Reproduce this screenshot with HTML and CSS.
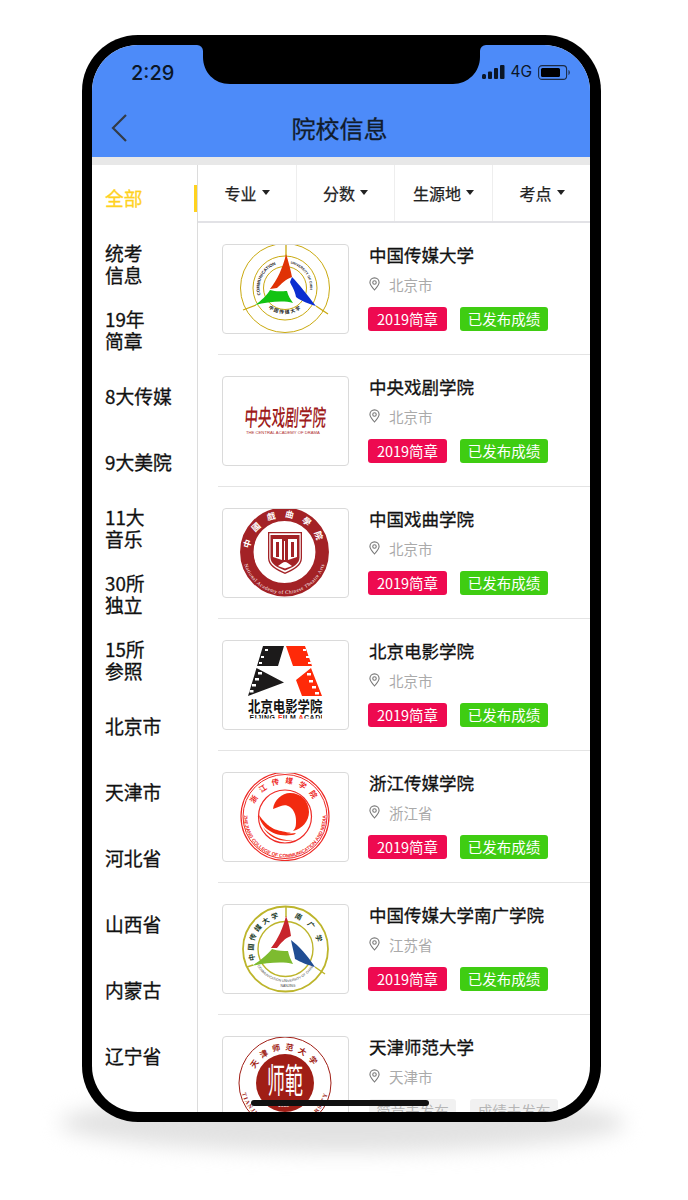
FILE: index.html
```html
<!DOCTYPE html>
<html lang="zh">
<head>
<meta charset="utf-8">
<title>院校信息</title>
<link rel="stylesheet" href="styles.css">
</head>
<body>
<div class="stage">
  <div class="shadow"></div>
  <div class="phone">
    <div class="screen">
      <header class="top">
        <div class="status">
          <span class="time">2:29</span>
          <div class="sys">
            <svg class="signal" width="23" height="14" viewBox="0 0 23 14"><rect x="0" y="9" width="4" height="5" rx="1.5"/><rect x="6" y="6.5" width="4" height="7.5" rx="1"/><rect x="12" y="3" width="4" height="11" rx="1"/><rect x="18" y="0" width="4.5" height="14" rx="1"/></svg>
            <span class="net">4G</span>
            <svg class="batt" width="32" height="15" viewBox="0 0 32 15"><rect x="0.6" y="0.6" width="28" height="13.8" rx="3.5" fill="none" stroke="#1b2a44" stroke-width="1.1"/><rect x="3" y="3" width="19" height="9" rx="1.5" fill="#000"/><path d="M30.5 5v5c.8-.3 1.3-1.3 1.3-2.5S31.300 5.300 30.500 5z" fill="#1b2a44"/></svg>
          </div>
        </div>
        <div class="nav">
          <svg class="back" width="18" height="30" viewBox="0 0 18 30"><path d="M16 2 3 15l13 13" fill="none" stroke="#333b47" stroke-width="2.200"/></svg>
          <h1 class="title">院校信息</h1>
        </div>
      </header>
      <div class="band"></div>
      <div class="body">
        <aside class="side">
          <div class="cat on">全部</div>
          <div class="cat">统考<br>信息</div>
          <div class="cat">19年<br>简章</div>
          <div class="cat">8大传媒</div>
          <div class="cat">9大美院</div>
          <div class="cat">11大<br>音乐</div>
          <div class="cat">30所<br>独立</div>
          <div class="cat">15所<br>参照</div>
          <div class="cat">北京市</div>
          <div class="cat">天津市</div>
          <div class="cat">河北省</div>
          <div class="cat">山西省</div>
          <div class="cat">内蒙古</div>
          <div class="cat">辽宁省</div>
        </aside>
        <main class="main">
          <div class="filters">
            <div class="filter">专业</div>
            <div class="filter">分数</div>
            <div class="filter">生源地</div>
            <div class="filter">考点</div>
          </div>

          <article class="row">
            <div class="logo">
              <svg viewBox="0 0 127 90" width="127" height="90">
                <defs>
                  <path id="a1" d="M38.500 51A25 25 0 0 1 58 19.500"/>
                  <path id="a2" d="M68.500 19.500A25 25 0 0 1 88 46"/>
                  <path id="a3" d="M40 57A27 27 0 0 0 86 57"/>
                </defs>
                <g fill="none" stroke="#c9a90f" stroke-width="1">
                  <circle cx="63" cy="44" r="44.500"/>
                  <circle cx="63" cy="44" r="32"/>
                  <circle cx="63" cy="44" r="21.500"/>
                  <path d="M64 1v11M21 66l13-5M94 62l12 8" stroke-width="1.300"/>
                </g>
                <path d="M64 10c3 9 5 18 6 23-6 2-11 7-15 11l-7 1c7-9 13-21 16-35z" fill="#e03205"/>
                <path d="M70 33c7 7 15 18 24 29-7-2-15-5-20-9-1-7-5-12-6-15z" fill="#0b2ed0"/>
                <path d="M33 61c6-4 12-10 15-15 6 2 13 1 17 1 1 5 4 9 6 12-10-3-25-1-38 2z" fill="#12c312"/>
                <text class="t-gold"><textPath href="#a1">COMMUNICATION</textPath></text>
                <text class="t-gold-s"><textPath href="#a2">UNIVERSITY OF CHINA</textPath></text>
                <text class="t-seal"><textPath href="#a3" startOffset="50%">中国传媒大学</textPath></text>
              </svg>
            </div>
            <div class="info">
              <div class="name">中国传媒大学</div>
              <div class="loc"><svg class="pin" width="11" height="14" viewBox="0 0 12 15"><path d="M6 14C3 10.500 1 8.300 1 5.800a5 5 0 0 1 10 0C11 8.300 9 10.500 6 14z" fill="none" stroke="#777" stroke-width="1.200"/><circle cx="6" cy="5.800" r="1.900" fill="none" stroke="#777" stroke-width="1.200"/></svg><span>北京市</span></div>
              <div class="tags"><span class="tag red">2019简章</span><span class="tag green">已发布成绩</span></div>
            </div>
          </article>

          <article class="row">
            <div class="logo">
              <svg viewBox="0 0 127 90" width="127" height="90">
                <text class="t-drama" transform="translate(22 50) scale(1 1.700) skewX(-6)">中央戏剧学院</text>
                <text class="t-drama-en" x="24" y="57.500">THE CENTRAL ACADEMY OF DRAMA</text>
              </svg>
            </div>
            <div class="info">
              <div class="name">中央戏剧学院</div>
              <div class="loc"><svg class="pin" width="11" height="14" viewBox="0 0 12 15"><path d="M6 14C3 10.500 1 8.300 1 5.800a5 5 0 0 1 10 0C11 8.300 9 10.500 6 14z" fill="none" stroke="#777" stroke-width="1.200"/><circle cx="6" cy="5.800" r="1.900" fill="none" stroke="#777" stroke-width="1.200"/></svg><span>北京市</span></div>
              <div class="tags"><span class="tag red">2019简章</span><span class="tag green">已发布成绩</span></div>
            </div>
          </article>

          <article class="row">
            <div class="logo">
              <svg viewBox="0 0 127 90" width="127" height="90">
                <defs>
                  <path id="b1" d="M28 44A34.500 34.500 0 0 1 97 44"/>
                  <path id="b2" d="M20.500 44A42 42 0 0 0 104.500 44"/>
                </defs>
                <circle cx="62.500" cy="44" r="37.700" fill="none" stroke="#a32226" stroke-width="13.500"/>
                <text class="t-ring-cn"><textPath href="#b1" startOffset="50%">中國戲曲學院</textPath></text>
                <text class="t-ring-en"><textPath href="#b2" startOffset="50%">National Academy of Chinese Theatre Arts</textPath></text>
                <path d="M46 24h34v26c0 8-8 12-17 16-9-4-17-8-17-16z" fill="#a32226"/>
                <path d="M47.300 25.300h31.400v24.500c0 7-7 11-15.700 14.700-8.700-3.700-15.700-7.700-15.700-14.700z" fill="#fff"/>
                <path d="M48.500 27h29v22.500c0 6-6.500 10-14.500 13-8-3-14.500-7-14.500-13z" fill="#a32226"/>
                <path d="M51 31h9v21l-9-3zM66 31h9v18l-9 3z" fill="#fff"/>
                <path d="M54 34h3v15h-3zM69 34h3v15h-3z" fill="#a32226"/>
                <path d="M62.500 33v19" stroke="#fff" stroke-width="1"/>
                <path d="M56 58c3-2 5-4 7-4s4 2 7 4l-7 2.500z" fill="#fff"/>
              </svg>
            </div>
            <div class="info">
              <div class="name">中国戏曲学院</div>
              <div class="loc"><svg class="pin" width="11" height="14" viewBox="0 0 12 15"><path d="M6 14C3 10.500 1 8.300 1 5.800a5 5 0 0 1 10 0C11 8.300 9 10.500 6 14z" fill="none" stroke="#777" stroke-width="1.200"/><circle cx="6" cy="5.800" r="1.900" fill="none" stroke="#777" stroke-width="1.200"/></svg><span>北京市</span></div>
              <div class="tags"><span class="tag red">2019简章</span><span class="tag green">已发布成绩</span></div>
            </div>
          </article>

          <article class="row">
            <div class="logo">
              <svg viewBox="0 0 127 90" width="127" height="90">
                <path d="M41 6h21l-6 20H35zM34.500 28 62 42.500 26 56z" fill="#1c1a1a"/>
                <path d="M64 6h19l7 20H71zM89 28l11 28H80l-6-16z" fill="#ff2a08"/>
                <path d="M43 9h3v2h-3zM39 16h3v2h-3zM37 22h3v2h-3zM36 32h4v2.500h-4zM33 38h4v2.500h-4zM30 44h4v2.500h-4zM27.500 50h4v2.500h-4zM81 9h3v2h-3zM84 16h3v2h-3zM86 22h3v2h-3zM85 33h4v2.500h-4zM87 40h4v2.500h-4zM90 46h4v2.500h-4zM93 52h4v2.500h-4z" fill="#fff"/>
                <text class="t-film" transform="translate(26 72) scale(1 1.150)">北京电影学院</text>
                <text class="t-film-en" x="22" y="80">BEIJING <tspan class="t-red">F</tspan>ILM <tspan class="t-red">A</tspan>CADEMY</text>
                <rect x="2" y="78.500" width="123" height="8" fill="#fff"/>
                <rect x="2" y="73.300" width="25" height="6" fill="#fff"/>
                <rect x="100" y="73.300" width="25" height="6" fill="#fff"/>
              </svg>
            </div>
            <div class="info">
              <div class="name">北京电影学院</div>
              <div class="loc"><svg class="pin" width="11" height="14" viewBox="0 0 12 15"><path d="M6 14C3 10.500 1 8.300 1 5.800a5 5 0 0 1 10 0C11 8.300 9 10.500 6 14z" fill="none" stroke="#777" stroke-width="1.200"/><circle cx="6" cy="5.800" r="1.900" fill="none" stroke="#777" stroke-width="1.200"/></svg><span>北京市</span></div>
              <div class="tags"><span class="tag red">2019简章</span><span class="tag green">已发布成绩</span></div>
            </div>
          </article>

          <article class="row">
            <div class="logo">
              <svg viewBox="0 0 127 90" width="127" height="90">
                <defs>
                  <path id="c1" d="M30 44.500A33 33 0 0 1 96 44.500"/>
                  <path id="c2" d="M22.500 38A41 41 0 1 0 103.500 38"/>
                </defs>
                <circle cx="63" cy="44.500" r="44" fill="none" stroke="#ee2a26" stroke-width="1.200"/>
                <circle cx="63" cy="44.500" r="42" fill="none" stroke="#ee2a26" stroke-width="1"/>
                <circle cx="63" cy="44.500" r="26.500" fill="none" stroke="#ee2a26" stroke-width="1.200"/>
                <text class="t-z-cn"><textPath href="#c1" startOffset="50%">浙江传媒学院</textPath></text>
                <text class="t-z-en"><textPath href="#c2" startOffset="50%">ZHEJIANG COLLEGE OF COMMUNICATION AND MEDIA</textPath></text>
                <path d="M51 37C52 28 60 21 68 21c11 0 19 8 19 19 0 9-7 17-16 19 3-3 3-6 3-10 0-6-2-11-6-14-3-2-6-2-9-1-3 1-5 2-8 3z" fill="#f22a10"/>
                <path d="M37 43c1 11 14 23 33 20 2 0 3-1 4-2-13 2-28-4-37-18zM41 55c7 9 19 14 30 13-11 3-24-2-30-13zM44 51c6 8 14 10 25 10-3-1-20-2-25-10z" fill="#f22a10"/>
              </svg>
            </div>
            <div class="info">
              <div class="name">浙江传媒学院</div>
              <div class="loc"><svg class="pin" width="11" height="14" viewBox="0 0 12 15"><path d="M6 14C3 10.500 1 8.300 1 5.800a5 5 0 0 1 10 0C11 8.300 9 10.500 6 14z" fill="none" stroke="#777" stroke-width="1.200"/><circle cx="6" cy="5.800" r="1.900" fill="none" stroke="#777" stroke-width="1.200"/></svg><span>浙江省</span></div>
              <div class="tags"><span class="tag red">2019简章</span><span class="tag green">已发布成绩</span></div>
            </div>
          </article>

          <article class="row">
            <div class="logo">
              <svg viewBox="0 0 127 90" width="127" height="90">
                <defs>
                  <path id="d1" d="M33.400 56A32 32 0 0 1 58 13.500"/>
                  <path id="d2" d="M72 14A32 32 0 0 1 95 52"/>
                  <path id="d3" d="M35.200 62A33 33 0 0 0 91.800 62"/>
                </defs>
                <g fill="none" stroke="#bdb52c">
                  <circle cx="63.500" cy="45" r="42.500" stroke-width="1.800"/>
                  <circle cx="63.500" cy="45" r="27.500" stroke-width="1.400"/>
                  <path d="M64 3v10M25 63l6-2M93 63l10 7" stroke-width="1.500"/>
                </g>
                <path d="M64 12c3 7 4 14 5 20-6 2-10 7-14 12l-6 0c7-9 12-20 15-32z" fill="#c8252c"/>
                <path d="M69 36c8 6 16 15 24 27-7-2-15-5-20-8-1-7-3-13-4-19z" fill="#204d94"/>
                <path d="M29 62c8-4 16-11 21-17 6 2 12 2 16 2 1 5 3 9 5 13-11-3-28-1-42 2z" fill="#7dbb2f"/>
                <text class="t-olive-cn"><textPath href="#d1">中国传媒大学</textPath></text>
                <text class="t-olive-cn2"><textPath href="#d2">南广学院</textPath></text>
                <text class="t-olive-en"><textPath href="#d3" startOffset="50%">COMMUNICATION UNIVERSITY OF CHINA</textPath></text>
                <text class="t-olive-en" x="66" y="83">NANJING</text>
              </svg>
            </div>
            <div class="info">
              <div class="name">中国传媒大学南广学院</div>
              <div class="loc"><svg class="pin" width="11" height="14" viewBox="0 0 12 15"><path d="M6 14C3 10.500 1 8.300 1 5.800a5 5 0 0 1 10 0C11 8.300 9 10.500 6 14z" fill="none" stroke="#777" stroke-width="1.200"/><circle cx="6" cy="5.800" r="1.900" fill="none" stroke="#777" stroke-width="1.200"/></svg><span>江苏省</span></div>
              <div class="tags"><span class="tag red">2019简章</span><span class="tag green">已发布成绩</span></div>
            </div>
          </article>

          <article class="row">
            <div class="logo">
              <svg viewBox="0 0 127 90" width="127" height="90">
                <defs>
                  <path id="e1" d="M30 47A33 33 0 0 1 96 47"/>
                  <path id="e2" d="M19 47A44 44 0 0 0 107 47"/>
                </defs>
                <circle cx="63" cy="47" r="46" fill="none" stroke="#a01e16" stroke-width="1"/>
                <circle cx="63" cy="47" r="29" fill="#a01e16"/>
                <text class="t-seal-big" transform="translate(45 57) scale(1 1.900)">师範</text>
                <text class="t-seal-ring"><textPath href="#e1" startOffset="50%">天津师范大学</textPath></text>
                <text class="t-seal-en"><textPath href="#e2" startOffset="50%">TIANJIN NORMAL UNIVERSITY</textPath></text>
                <text class="t-seal-yr" x="56" y="71">1958</text>
              </svg>
            </div>
            <div class="info">
              <div class="name">天津师范大学</div>
              <div class="loc"><svg class="pin" width="11" height="14" viewBox="0 0 12 15"><path d="M6 14C3 10.500 1 8.300 1 5.800a5 5 0 0 1 10 0C11 8.300 9 10.500 6 14z" fill="none" stroke="#777" stroke-width="1.200"/><circle cx="6" cy="5.800" r="1.900" fill="none" stroke="#777" stroke-width="1.200"/></svg><span>天津市</span></div>
              <div class="tags"><span class="tag off">简章未发布</span><span class="tag off">成绩未发布</span></div>
            </div>
          </article>
        </main>
      </div>
      <div class="home"></div>
    </div>
    <svg class="notch" width="290" height="40" viewBox="0 0 290 40"><path d="M0 0h290a6 6 0 0 0-6 6v6c0 15-12 27-27 27H34C18 39 7 27 7 12V6a6 6 0 0 0-6-6z" fill="#000"/></svg>
  </div>
</div>
</body>
</html>
```
FILE: styles.css
```css
* { box-sizing: border-box; }
html, body { margin: 0; padding: 0; background: #fff; }
body { font-family: "Noto Sans CJK SC", "Noto Sans", sans-serif; color: #111; }

.stage { position: relative; width: 688px; height: 1200px; padding: 35px 0 0 82px; overflow: hidden; }
.shadow {
  position: absolute; left: 60px; top: 1094px; width: 565px; height: 58px;
  border-radius: 50%; background: #e2e2e2; filter: blur(10px);
}
.phone {
  position: relative; width: 519px; height: 1087px;
  background: #000; border-radius: 56px; padding: 10px 11px 10px 10px;
}
.screen {
  position: relative; width: 498px; height: 1067px; background: #fff;
  border-radius: 46px; overflow: hidden; display: flex; flex-direction: column;
}
.notch { position: absolute; left: 114px; top: 10px; }

.top { background: #4d8bf9; height: 112px; flex: none; }
.status { display: flex; justify-content: space-between; align-items: center; height: 52px; padding: 2px 20px 0 39px; }
.time { font: 500 20px/26px Inter, sans-serif; color: #0b1626; margin-top: 2px; }
.sys { display: flex; align-items: center; gap: 5px; }
.signal { fill: #0b1626; }
.net { font: 400 15.500px/16px Inter, sans-serif; color: #0b1626; }
.batt { margin-left: 1px; }
.nav { position: relative; display: flex; align-items: center; justify-content: center; height: 50px; padding: 12px 3px 0 0; }
.back { position: absolute; left: 18px; top: 16px; }
.title { margin: 0; font-size: 24px; line-height: 32px; font-weight: 400; color: #111c2c; -webkit-text-stroke: .3px #111c2c; }
.band { height: 8px; background: #e8e8e8; flex: none; }

.body { display: flex; flex: 1; min-height: 0; }
.side { width: 106px; flex: none; border-right: 1.500px solid #dcdcdc; }
.cat {
  position: relative; height: 66px; padding-left: 13px; display: flex; align-items: center;
  font-size: 18.800px; line-height: 22px; color: #111; -webkit-text-stroke: .3px #111;
}
.cat.on { color: #ffd21f; -webkit-text-stroke: .3px #ffd21f; }
.cat.on::after {
  content: ""; position: absolute; right: 0; top: 20px; width: 3px; height: 27px; background: #ffd21f;
}

.main { flex: 1; min-width: 0; }
.filters { display: flex; height: 58px; border-bottom: 2px solid #e2e2e6; }
.filter {
  flex: 0 0 98px; display: flex; align-items: center; justify-content: center; gap: 5px;
  font-size: 16px; color: #222; -webkit-text-stroke: .25px #222; border-right: 1.500px solid #eee;
}
.filter:first-child { flex-basis: 99px; }
.filter:last-child { border-right: 0; }
.filter::after {
  content: ""; border-left: 4.500px solid transparent; border-right: 4.500px solid transparent;
  border-top: 5px solid #222; margin-top: -1px;
}

.row { display: flex; height: 132px; margin-left: 20px; padding: 21px 0 0 4px; border-bottom: 1.500px solid #e4e4e4; }
.logo {
  width: 127px; height: 90px; flex: none; background: #fff; border: 1.500px solid #dadada; border-radius: 4px;
  overflow: hidden; display: flex; align-items: center; justify-content: center;
}
.logo svg { display: block; flex: none; }
.info { margin-left: 20px; display: flex; flex-direction: column; }
.name { font-size: 17.500px; line-height: 22px; color: #111; -webkit-text-stroke: .3px #111; }
.loc { display: flex; align-items: center; gap: 9px; margin-top: 7px; height: 22px; font-size: 14.500px; color: #aaa; }
.tags { display: flex; gap: 13px; margin-top: 12px; margin-left: -1px; }
.tag { height: 24px; border-radius: 3px; font-size: 14.500px; line-height: 24px; color: #fff; white-space: nowrap; text-align: center; }
.tag.red { background: #ee0a50; width: 79px; }
.tag.green { background: #3fcd12; width: 88px; }
.tag.off { background: #f1f1f1; color: #b5b5b5; width: 88px; }
.tag.off:first-child { width: 87px; margin-left: 1px; }
.tag.off + .tag.off { margin-left: 1px; }

.home { position: absolute; left: 159px; bottom: 6px; width: 178px; height: 6px; border-radius: 3px; background: #111; }

.t-gold { font: 700 4.300px "Liberation Sans", sans-serif; fill: #222; }
.t-gold-s { font: 700 3.400px "Liberation Sans", sans-serif; fill: #222; }
.t-seal { font: 700 4.800px "Noto Sans CJK SC", sans-serif; fill: #222; letter-spacing: 1.200px; text-anchor: middle; }
.t-drama { font: 500 13.600px "Noto Sans CJK SC", sans-serif; fill: #9e1c1c; }
.t-drama-en { font: 400 4.200px "Liberation Sans", sans-serif; fill: #b03030; }
.t-ring-cn { font: 700 8.500px "Noto Sans CJK SC", sans-serif; fill: #fff; letter-spacing: 8.500px; text-anchor: middle; }
.t-ring-en { font: 400 5px "Liberation Serif", serif; fill: #fff; letter-spacing: .5px; text-anchor: middle; }
.t-film { font: 700 12.400px "Noto Sans CJK SC", sans-serif; fill: #111; }
.t-film-en { font: 700 7px "Liberation Sans", sans-serif; fill: #111; letter-spacing: .5px; }
.t-red { fill: #ff2a08; }
.t-z-cn { font: 700 7.500px "Noto Sans CJK SC", sans-serif; fill: #ee2a26; letter-spacing: 5.500px; text-anchor: middle; }
.t-z-en { font: 700 4.900px "Liberation Sans", sans-serif; fill: #ee2a26; text-anchor: middle; }
.t-olive-cn { font: 700 7px "Noto Sans CJK SC", sans-serif; fill: #1d3d2a; letter-spacing: 2.500px; }
.t-olive-cn2 { font: 700 7px "Noto Sans CJK SC", sans-serif; fill: #1d3d2a; letter-spacing: 7px; }
.t-olive-en { font: 400 3.400px "Liberation Sans", sans-serif; fill: #444; text-anchor: middle; }
.t-seal-big { font: 400 18px "Noto Sans CJK SC", sans-serif; fill: #fff; }
.t-seal-ring { font: 700 8px "Noto Sans CJK SC", sans-serif; fill: #a01e16; letter-spacing: 4.500px; text-anchor: middle; }
.t-seal-en { font: 700 6px "Liberation Serif", serif; fill: #a01e16; letter-spacing: 1px; text-anchor: middle; }
.t-seal-yr { font: 400 5px "Liberation Sans", sans-serif; fill: #fff; }
```
